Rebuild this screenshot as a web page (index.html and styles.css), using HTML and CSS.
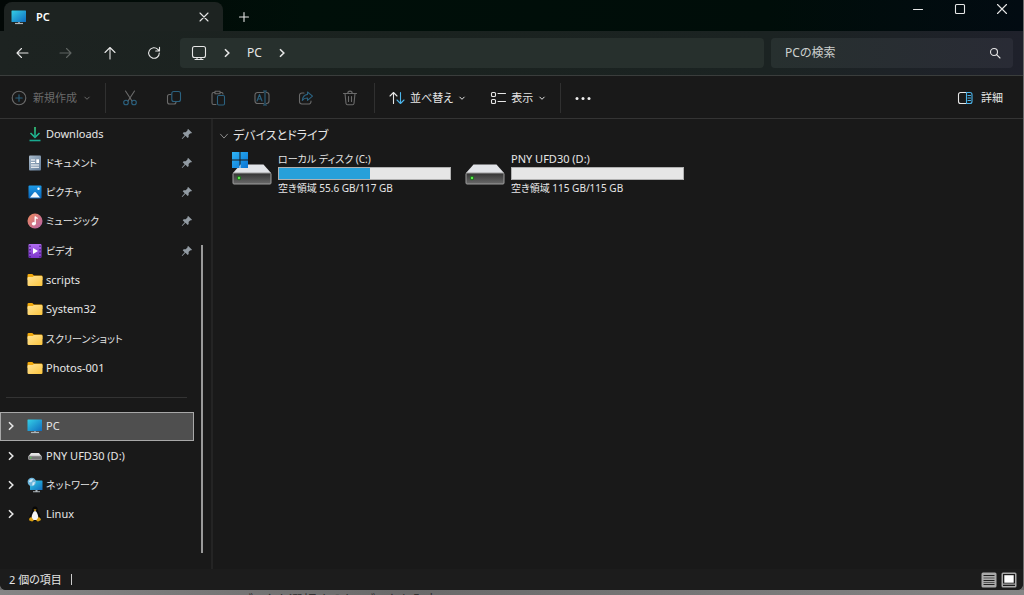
FILE: index.html
```html
<!DOCTYPE html>
<html lang="ja">
<head>
<meta charset="utf-8">
<meta name="viewport" content="width=device-width, initial-scale=1">
<title>PC</title>
<link rel="stylesheet" href="styles.css">
</head>
<body>
<svg class="defs" width="0" height="0" aria-hidden="true">
  <defs>
    <linearGradient id="screen" x1="0" y1="0" x2="1" y2="1"><stop offset="0" stop-color="#35d0e6"/><stop offset="1" stop-color="#0f6cc0"/></linearGradient>
    <linearGradient id="folder" x1="0" y1="0" x2="1" y2="1"><stop offset="0" stop-color="#ffe49a"/><stop offset="1" stop-color="#fcc53c"/></linearGradient>
    <linearGradient id="music" x1="0" y1="0" x2="1" y2="1"><stop offset="0" stop-color="#ee8a5c"/><stop offset="1" stop-color="#b561a8"/></linearGradient>
    <linearGradient id="video" x1="0" y1="0" x2="0" y2="1"><stop offset="0" stop-color="#b06cf0"/><stop offset="1" stop-color="#7c35c9"/></linearGradient>
    <linearGradient id="picture" x1="0" y1="0" x2="0" y2="1"><stop offset="0" stop-color="#1d9be8"/><stop offset="1" stop-color="#0a63b8"/></linearGradient>
    <linearGradient id="doc" x1="0" y1="0" x2="1" y2="1"><stop offset="0" stop-color="#a9bbcc"/><stop offset="1" stop-color="#637c98"/></linearGradient>
    <linearGradient id="down" x1="0" y1="0" x2="0" y2="1"><stop offset="0" stop-color="#36d07c"/><stop offset="1" stop-color="#14a398"/></linearGradient>
    <linearGradient id="metal" x1="0" y1="0" x2="0" y2="1"><stop offset="0" stop-color="#333"/><stop offset="1" stop-color="#6a6a6a"/></linearGradient>
    <linearGradient id="flag" x1="0" y1="0" x2="1" y2="1"><stop offset="0" stop-color="#2fb4f5"/><stop offset="1" stop-color="#0874d4"/></linearGradient>
    <symbol id="i-pc" viewBox="0 0 16 16"><rect x=".5" y="1.5" width="14.5" height="11.5" rx=".6" fill="url(#screen)"/><path d="M7 13h2v1.5H7z" fill="#8b959c"/><path d="M4 14.5h8" stroke="#aeb6bb" stroke-width="1.2"/></symbol>
    <symbol id="i-folder" viewBox="0 0 16 16"><path d="M.5 3.2Q.5 2 1.7 2h3.6l1.6 1.500h7.400q1.200 0 1.200 1.200V8H.5z" fill="#f2a90b"/><path d="M.5 6q0-1 1-1h4.200l1.200-1h7.400q1.200 0 1.200 1.200v7.600q0 1.200-1.200 1.200H1.700Q.5 14 .5 12.800z" fill="url(#folder)"/></symbol>
    <symbol id="i-pin" viewBox="0 0 12 12"><path d="M7.200 1 11 4.800l-1 .7-.7-.2L7.600 7l.1 2-1 1-2.200-2.200L1.300 11l-.6-.6 3-3.200-2-2 1-1 2 .1 1.800-1.800-.1-.7z" fill="#929ba3"/></symbol>
    <symbol id="i-chev" viewBox="0 0 8 12"><path d="m2 2.200 3.800 3.800L2 9.800" fill="none" stroke="currentColor" stroke-width="1.600"/></symbol>
    <symbol id="i-caret" viewBox="0 0 8 8"><path d="m1.500 2.800 2.500 2.500 2.500-2.500" fill="none" stroke="currentColor"/></symbol>
    <symbol id="i-drive" viewBox="0 0 40 34"><path d="M8.500 13.500h23L39 22H1z" fill="#e2e4e8"/><rect x="1" y="22" width="38" height="11" rx="1" fill="url(#metal)" stroke="#9c9c9c"/><circle cx="7" cy="27" r="2.200" fill="#1e6f1e"/><circle cx="7" cy="27" r="1.200" fill="#5ee84e"/></symbol>
  </defs>
</svg>
<div class="window">
  <header class="titlebar">
    <div class="tab">
      <svg class="i16"><use href="#i-pc"/></svg>
      <span class="tab-name">PC</span>
      <button class="plain" aria-label="タブを閉じる"><svg class="i12" viewBox="0 0 12 12"><path d="m2 2 8 8M10 2 2 10" class="ln"/></svg></button>
    </div>
    <button class="plain new-tab" aria-label="新しいタブ"><svg class="i12" viewBox="0 0 12 12"><path d="M6 1.500v9M1.500 6h9" class="ln"/></svg></button>
    <div class="captions">
      <button class="plain" aria-label="最小化"><svg class="i12" viewBox="0 0 12 12"><path d="M1.500 6.500h9" class="ln"/></svg></button>
      <button class="plain" aria-label="最大化"><svg class="i12" viewBox="0 0 12 12"><rect x="1.500" y="1.500" width="9" height="9" rx="1" class="ln"/></svg></button>
      <button class="plain" aria-label="閉じる"><svg class="i12" viewBox="0 0 12 12"><path d="m1.500 1.500 9 9M10.500 1.500l-9 9" class="ln"/></svg></button>
    </div>
  </header>

  <div class="navbar">
    <div class="nav-buttons">
      <button class="plain" aria-label="戻る"><svg class="i14" viewBox="0 0 14 14"><path d="M13 7H2M6.500 2.500 2 7l4.500 4.500" class="ln"/></svg></button>
      <button class="plain dim" aria-label="進む" disabled><svg class="i14" viewBox="0 0 14 14"><path d="M1 7h11M7.500 2.500 12 7l-4.500 4.500" class="ln"/></svg></button>
      <button class="plain" aria-label="上へ"><svg class="i14" viewBox="0 0 14 14"><path d="M7 13V2M2 6.500l5-5 5 5" class="ln"/></svg></button>
      <button class="plain" aria-label="更新"><svg class="i14" viewBox="0 0 14 14"><path d="M12.300 7A5.300 5.300 0 1 1 10.800 3.300L12.500 5M12.500 1.200V5H8.700" class="ln"/></svg></button>
    </div>
    <nav class="address" aria-label="アドレス">
      <svg class="i16" viewBox="0 0 16 16"><rect x="1.500" y="1.500" width="13" height="11" rx="2" class="ln"/><path d="M6 12.500v2M10 12.500v2M4 14.500h8" class="ln"/></svg>
      <svg class="chev"><use href="#i-chev"/></svg>
      <a href="#pc">PC</a>
      <svg class="chev"><use href="#i-chev"/></svg>
    </nav>
    <label class="search">
      <input type="text" placeholder="PCの検索" aria-label="PCの検索">
      <svg class="i12" viewBox="0 0 12 12"><circle cx="5" cy="5" r="3.500" class="ln"/><path d="m7.600 7.600 3.400 3.400" class="ln"/></svg>
    </label>
  </div>

  <div class="toolbar">
    <button class="cmd new dim"><svg class="i16" viewBox="0 0 16 16"><circle cx="8" cy="8" r="6.800" class="ln"/><path d="M8 4.800v6.400M4.800 8h6.400" class="ln blue"/></svg>新規作成<svg class="caret"><use href="#i-caret"/></svg></button>
    <div class="icons">
      <button class="plain dim" aria-label="切り取り"><svg class="i16" viewBox="0 0 16 16"><path d="M3.500 1 10 11M12.500 1 6 11" class="ln"/><circle cx="4" cy="12.500" r="2.300" class="ln blue"/><circle cx="12" cy="12.500" r="2.300" class="ln blue"/></svg></button>
      <button class="plain dim" aria-label="コピー"><svg class="i16" viewBox="0 0 16 16"><path d="M5 4.500H3.500a2 2 0 0 0-2 2V12a2 2 0 0 0 2 2H8a2 2 0 0 0 2-2" class="ln"/><rect x="5.800" y="1.500" width="8.700" height="10" rx="2" class="ln blue"/></svg></button>
      <button class="plain dim" aria-label="貼り付け"><svg class="i16" viewBox="0 0 16 16"><path d="M6 14.500H3.500a1.500 1.500 0 0 1-1.500-1.500V4a1.500 1.500 0 0 1 1.500-1.500H5M10 2.500h1.500A1.500 1.500 0 0 1 13 4M5 1.200h5v2.600H5z" class="ln"/><rect x="7.500" y="5.500" width="7" height="9.500" rx="1.200" class="ln blue"/></svg></button>
      <button class="plain dim" aria-label="名前の変更"><svg class="i16" viewBox="0 0 16 16"><path d="M9.500 2.500h-6a2.500 2.500 0 0 0-2.500 2.500v6a2.500 2.500 0 0 0 2.500 2.500h6M12.500 2.500A2.500 2.500 0 0 1 15 5v6a2.500 2.500 0 0 1-2.500 2.500" class="ln"/><path d="m3 11 2.500-6.500L8 11M4 9h3M11 1v14M9.500 1h3M9.500 15h3" class="ln blue"/></svg></button>
      <button class="plain dim" aria-label="共有"><svg class="i16" viewBox="0 0 16 16"><path d="M6 3H4a2.500 2.500 0 0 0-2.500 2.500v6A2.500 2.500 0 0 0 4 14h6.500a2.500 2.500 0 0 0 2.500-2.500V11" class="ln"/><path d="M9.500 2 14.500 6.200 9.500 10.400V8Q6 7.800 4.300 10.500 4.800 5 9.500 4.400z" class="ln blue"/></svg></button>
      <button class="plain dim" aria-label="削除"><svg class="i16" viewBox="0 0 16 16"><path d="M1.500 3.500h13M5.800 3.300a2.200 2.200 0 0 1 4.400 0M3 3.500l1 10a1.500 1.500 0 0 0 1.500 1.200h5A1.500 1.500 0 0 0 12 13.500l1-10M6.500 6.500v5M9.500 6.500v5" class="ln"/></svg></button>
    </div>
    <div class="views">
      <button class="cmd"><svg class="i16" viewBox="0 0 16 16"><path d="M4.500 13.500V2.500M1 6l3.500-3.500L8 6" class="ln"/><path d="M11.500 2.500v11M8 10l3.500 3.500L15 10" class="ln blue"/></svg><span>並べ替え</span><svg class="caret"><use href="#i-caret"/></svg></button>
      <button class="cmd"><svg class="i16" viewBox="0 0 16 16"><rect x="1.500" y="2.500" width="4" height="4" rx="1" class="ln"/><rect x="1.500" y="9.500" width="4" height="4" rx="1" class="ln"/><path d="M8 3.500h7.500M8 11.500h7.500" class="ln"/></svg><span>表示</span><svg class="caret"><use href="#i-caret"/></svg></button>
    </div>
    <button class="plain more" aria-label="もっと見る"><svg class="i16" viewBox="0 0 16 16" fill="#eee"><circle cx="2" cy="8.500" r="1.500"/><circle cx="8" cy="8.500" r="1.500"/><circle cx="14" cy="8.500" r="1.500"/></svg></button>
    <button class="cmd details"><svg class="i16" viewBox="0 0 16 16"><path d="M9 2.500H3.500a2 2 0 0 0-2 2v7a2 2 0 0 0 2 2H9" class="ln"/><path d="M9.500 2.500h3.500a2 2 0 0 1 2 2v7a2 2 0 0 1-2 2H9.500zM11 5.500h2.500M11 8h2.500M11 10.500h2.500" class="ln blue"/></svg><span>詳細</span></button>
  </div>

  <main class="body">
    <nav class="sidebar" aria-label="ナビゲーション">
      <ul class="tree">
        <li><a href="#d"><svg class="i16" viewBox="0 0 16 16"><path d="M3.500 7 8 11.300 12.500 7" fill="none" stroke="#22b88c" stroke-width="1.600"/><path d="M7.200 1h1.600v10H7.200z" fill="url(#down)"/><path d="M2.500 13.700h11v1.600h-11z" fill="#19a98f"/></svg><span>Downloads</span><svg class="pin"><use href="#i-pin"/></svg></a></li>
        <li><a href="#d"><svg class="i16" viewBox="0 0 16 16"><rect x="2" y=".5" width="12" height="15" rx="1" fill="url(#doc)"/><path d="M4 5h4M4 7.500h4M4 10h8M4 12.200h8" stroke="#fff" stroke-width="1.100"/><path d="M9.300 4.300H12V8H9.300z" fill="#fff"/></svg><span class="kana">ドキュメント</span><svg class="pin"><use href="#i-pin"/></svg></a></li>
        <li><a href="#d"><svg class="i16" viewBox="0 0 16 16"><rect x="1.500" y="1.500" width="13" height="13" rx="1" fill="url(#picture)"/><path d="m3 13.500 4-5q1-1 2 0l4 5z" fill="#f2f8fd"/><circle cx="11.500" cy="4.700" r="1.200" fill="#fff"/></svg><span class="kana">ピクチャ</span><svg class="pin"><use href="#i-pin"/></svg></a></li>
        <li><a href="#d"><svg class="i16" viewBox="0 0 16 16"><circle cx="8" cy="8" r="7.500" fill="url(#music)"/><ellipse cx="6.800" cy="10.800" rx="2" ry="1.700" fill="#fff"/><path d="M8.200 11V3.500q.6 1.600 2.500 2" fill="none" stroke="#fff" stroke-width="1.300"/></svg><span class="kana">ミュージック</span><svg class="pin"><use href="#i-pin"/></svg></a></li>
        <li><a href="#d"><svg class="i16" viewBox="0 0 16 16"><rect x="1.500" y="1" width="13" height="14" rx="1" fill="url(#video)"/><path d="M3 2.500v12M13 2.500v12" stroke="#461a80" stroke-width="1.300" stroke-dasharray="1.500 2"/><path d="m6 5 5 3-5 3z" fill="#fff"/></svg><span class="kana">ビデオ</span><svg class="pin"><use href="#i-pin"/></svg></a></li>
        <li><a href="#d"><svg class="i16"><use href="#i-folder"/></svg><span>scripts</span></a></li>
        <li><a href="#d"><svg class="i16"><use href="#i-folder"/></svg><span>System32</span></a></li>
        <li><a href="#d"><svg class="i16"><use href="#i-folder"/></svg><span class="kana">スクリーンショット</span></a></li>
        <li><a href="#d"><svg class="i16"><use href="#i-folder"/></svg><span>Photos-001</span></a></li>
        <li class="rule" role="separator"></li>
        <li><a class="root selected" href="#pc"><svg class="chev"><use href="#i-chev"/></svg><svg class="i16"><use href="#i-pc"/></svg><span>PC</span></a></li>
        <li><a class="root" href="#d"><svg class="chev"><use href="#i-chev"/></svg><svg class="i16" viewBox="0 0 16 16"><path d="M4 5h8l2.500 3.200h-13z" fill="#e4e4e4"/><rect x="1.500" y="8" width="13" height="3.500" rx=".6" fill="#777" stroke="#b0b0b0" stroke-width=".7"/><circle cx="3.800" cy="9.800" r=".8" fill="#4fdc4a"/></svg><span>PNY UFD30 (D:)</span></a></li>
        <li><a class="root" href="#d"><svg class="chev"><use href="#i-chev"/></svg><svg class="i16" viewBox="0 0 16 16"><rect x="3" y="3.500" width="12.500" height="9.500" rx=".6" fill="url(#screen)"/><path d="M8.500 13h2v1.500h-2zM6 14.200h7v1H6z" fill="#aeb6bb"/><circle cx="4.800" cy="5" r="4.200" fill="#6db6dc"/><path d="M1.800 4.500Q3 1.500 6 2L5 4.500 3 5.500zM5.500 5.500 8 5 7 8 5.200 8.500z" fill="#d5eaf5"/></svg><span class="kana">ネットワーク</span></a></li>
        <li><a class="root" href="#d"><svg class="chev"><use href="#i-chev"/></svg><svg class="i16" viewBox="0 0 16 16"><path d="M8 .5c2 0 2.700 1.300 2.700 3.200 0 2 2.800 4.300 2.800 8L11 14.500H5L2.500 12c0-4 2.800-6 2.800-8.300C5.300 1.800 6 .5 8 .5z" fill="#080808"/><path d="M8 5c1.500 0 3.300 3.500 3.300 6.500S9.500 14 8 14s-3.300.5-3.300-2.500S6.500 5 8 5z" fill="#f4f4f4"/><path d="M6.600 3.800 8 3.200l1.500.6L8 5.200zM4.300 11l2.500 3.300q-.7 1.500-2.500 1L2 14.300 2.500 12zM11.700 11l-2.500 3.300q.7 1.500 2.500 1l2.300-1.300-.8-2z" fill="#dda112"/></svg><span>Linux</span></a></li>
      </ul>
      <div class="scroll"></div>
    </nav>
    <section class="content">
      <h2 class="group"><svg class="fold" viewBox="0 0 12 12"><path d="m1.500 3.500 4.500 5 4.500-5" fill="none" stroke="#8b8b8b" stroke-width="1.200"/></svg>デバイスとドライブ</h2>
      <div class="drives">
        <article class="drive">
          <svg class="disk" viewBox="0 0 40 34"><use href="#i-drive"/><path d="M0 1h7.500v7.500H0zM8.500 1H16v7.500H8.500zM0 9.500h7.500V17H0zM8.500 9.500H16V17H8.500z" fill="url(#flag)"/></svg>
          <div class="info"><div class="kana">ローカル ディスク (C:)</div><div class="bar"><div class="used" style="width:53%"></div></div><div class="kana">空き領域 55.6 GB/117 GB</div></div>
        </article>
        <article class="drive">
          <svg class="disk"><use href="#i-drive"/></svg>
          <div class="info"><div>PNY UFD30 (D:)</div><div class="bar"></div><div class="kana">空き領域 115 GB/115 GB</div></div>
        </article>
      </div>
    </section>
  </main>

  <footer class="status">
    <span class="count">2 個の項目</span>
    <button class="plain" aria-label="詳細表示"><svg class="i16" viewBox="0 0 16 16"><rect x=".5" y=".5" width="15" height="15" rx="1.500" fill="#aaa"/><path d="M2.500 3.500h11M2.500 8.500h11M2.500 12.500h11" stroke="#202020" stroke-width="1.200"/><path d="M2.500 6h11M2.500 10.500h11" stroke="#555"/></svg></button>
    <button class="plain" aria-label="大アイコン"><svg class="i16" viewBox="0 0 16 16"><rect x=".5" y=".5" width="15" height="15" rx="1.500" fill="#aaa"/><path d="M2 2h12v9.500H2zM2 12.800h12v1.200H2z" fill="#1b1b1b"/><path d="M3.300 3.200h9.400v7.500H3.300z" fill="#fff"/></svg></button>
  </footer>
</div>
<div class="behind">ブックを選択するか、ブックを入力</div>
</body>
</html>
```
FILE: styles.css
```css
* { box-sizing: border-box; }

body {
  margin: 0;
  height: 100vh;
  display: flex;
  flex-direction: column;
  overflow: hidden;
  background: #6c6c6c;
  color: #e6e6e6;
  font: 11px/16px "Noto Sans", "Noto Sans CJK JP", sans-serif;
  font-feature-settings: "palt";
}

.defs { position: absolute; }
button, input { font: inherit; font-feature-settings: inherit; color: inherit; }
a { color: inherit; text-decoration: none; }
svg { flex: none; }
.i12 { width: 12px; height: 12px; }
.i14 { width: 14px; height: 14px; }
.i16 { width: 16px; height: 16px; }
.chev { width: 8px; height: 12px; }
.caret { width: 8px; height: 8px; }
.ln { fill: none; stroke: currentColor; stroke-width: 1.1; stroke-linecap: round; stroke-linejoin: round; }
.blue { stroke: #4cb4ea; }
.dim { color: #6b6b6b; }
.dim .blue { stroke: #2b6280; }
.kana { font-size: 10px; }

.plain, .cmd {
  display: flex;
  align-items: center;
  justify-content: center;
  padding: 0;
  border: 0;
  background: none;
}

.window {
  flex: 1;
  min-height: 0;
  display: flex;
  flex-direction: column;
  margin-right: 1px;
  background: #191919;
  border-radius: 0 0 6px 6px;
  overflow: hidden;
}

.titlebar {
  flex: none;
  display: flex;
  height: 31px;
  padding-left: 4px;
  background: linear-gradient(90deg, #020806, #000f09 30%, #000d09 75%, #020b12);
}
.tab {
  display: flex;
  align-items: center;
  width: 219px;
  margin-top: 2px;
  padding: 0 13px 0 7px;
  border-radius: 8px 8px 0 0;
  background: #1d2321;
}
.tab-name { flex: 1; margin-left: 9px; font-weight: 600; color: #fff; }
.new-tab { width: 42px; padding-top: 2px; }
.captions { display: flex; margin-left: auto; height: 17px; }
.captions .plain { width: 42px; }

.navbar {
  flex: none;
  display: flex;
  align-items: center;
  gap: 7px;
  height: 45px;
  padding-right: 10px;
  border-bottom: 1px solid #3a3d3c;
  background: linear-gradient(90deg, #1d2321, #1a221f 40%, #1b2322 75%, #1f212b);
  font-size: 12px;
}
.nav-buttons { display: flex; width: 173px; }
.nav-buttons .plain { width: 44px; height: 30px; flex: none; }
.nav-buttons .dim { color: #5f6462; }
.address, .search {
  display: flex;
  align-items: center;
  height: 30px;
  border-radius: 4px;
  background: #27302d;
}
.address { flex: 1; gap: 16px; padding: 0 11px; }
.address a { font-size: 12px; }
.search { width: 242px; padding: 0 12px 0 14px; background: linear-gradient(90deg, #27302f, #292b35); }
.search input {
  flex: 1;
  min-width: 0;
  padding: 0;
  border: 0;
  outline: 0;
  background: none;
}
.search input::placeholder { color: #ccd0ce; opacity: 1; }

.toolbar {
  flex: none;
  display: flex;
  align-items: center;
  height: 43px;
  padding-top: 1px;
  border-bottom: 1px solid #343434;
}
.cmd { gap: 6px; white-space: nowrap; }
.new { width: 106px; height: 30px; padding-right: 3px; border-right: 1px solid #303030; }
.icons { display: flex; height: 30px; padding: 0 2px; border-right: 1px solid #303030; }
.icons .plain { width: 44px; }
.views { display: flex; gap: 24px; height: 30px; padding: 0 14px; border-right: 1px solid #303030; }
.views .cmd { gap: 5px; }
.more { width: 44px; height: 30px; }
.details { margin-left: auto; margin-right: 20px; gap: 8px; }

.body { flex: 1; min-height: 0; display: flex; }
.sidebar { flex: none; display: flex; width: 213px; border-right: 2px solid #242424; }
.tree {
  flex: none;
  width: 194px;
  display: flex;
  flex-direction: column;
  justify-content: space-between;
  margin: 0;
  padding: 0 0 40px;
  list-style: none;
}
.tree a {
  display: flex;
  align-items: center;
  height: 29px;
  padding: 0 1px 0 27px;
}
.tree span { flex: 1; margin-left: 3px; }
.tree .root { padding-left: 7px; }
.tree .root .chev { margin-right: 12px; }
.tree .selected { background: #4f4f4f; outline: 1px solid #a8a8a8; outline-offset: -1px; }
.rule { height: 29px; margin: 0 7px 0 6px; background: linear-gradient(#333, #333) center / 100% 1px no-repeat; }
.pin { width: 12px; height: 12px; }
.scroll { width: 2px; margin: 126px 0 16px 7px; background: #9a9a9a; }

.content { flex: 1; min-width: 0; padding: 8px 6px; }
.group { display: flex; align-items: center; gap: 4px; margin: 0; font-size: 12px; line-height: 18px; font-weight: 400; }
.fold { width: 10px; height: 12px; }
.drives { display: flex; flex-wrap: wrap; gap: 14px; padding: 6px 0 0 13px; }
.drive { display: flex; gap: 6px; width: 219px; }
.disk { width: 40px; height: 34px; }
.info { flex: 1; white-space: nowrap; }
.bar { height: 13px; border: 1px solid #b0b0b0; background: #e6e6e6; }
.used { height: 100%; background: #26a0da; }

.status {
  flex: none;
  display: flex;
  align-items: center;
  gap: 4px;
  height: 21px;
  padding: 0 6px 0 9px;
  background: #1c1c1c;
}
.count { padding-right: 9px; margin-right: auto; border-right: 1px solid #ccc; line-height: 11px; }
.behind {
  flex: none;
  height: 5px;
  padding-left: 240px;
  overflow: hidden;
  background: linear-gradient(90deg, #858585, #6a6a6a 40%, #858585);
  color: #333;
  font-size: 14px;
  line-height: 20px;
}
```
